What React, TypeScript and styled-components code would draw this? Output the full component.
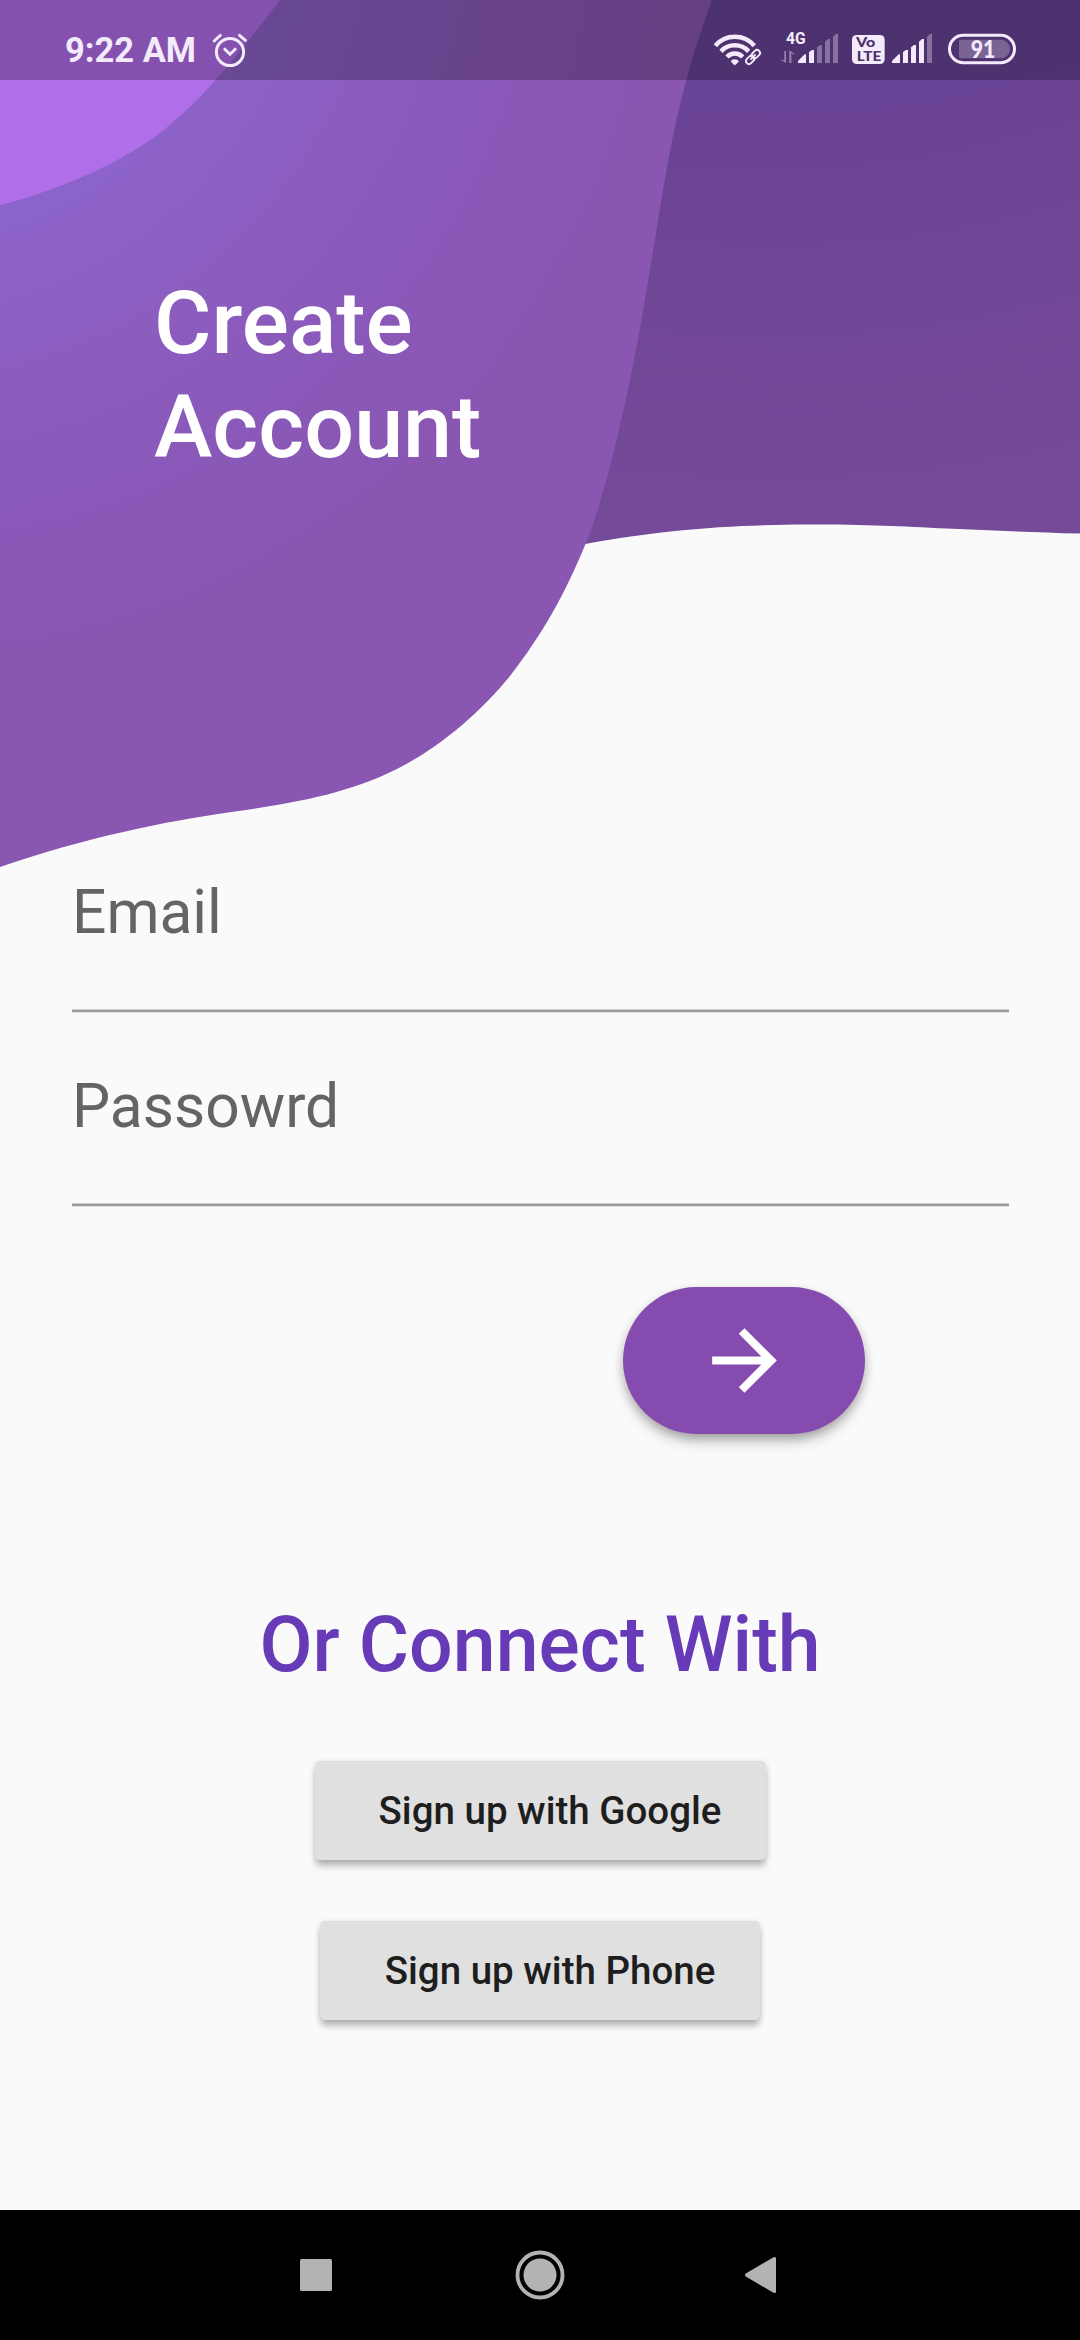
import React from "react";
import styled, { createGlobalStyle } from "styled-components";

const GlobalStyle = createGlobalStyle`
  *, *::before, *::after { box-sizing: border-box; }
  body { margin: 0; background: #fafafa; }
`;

const Screen = styled.div`
  display: flex;
  flex-direction: column;
  width: 1080px;
  height: 2340px;
  overflow: hidden;
  background: #fafafa;
  font-family: Roboto, "Liberation Sans", sans-serif;
`;

const Header = styled.header`
  position: relative;
  display: flex;
  flex-direction: column;
  height: 868px;
  flex: none;
`;

const Waves = styled.svg`
  position: absolute;
  inset: 0;
  display: block;
`;

const StatusBar = styled.div`
  position: relative;
  display: flex;
  justify-content: space-between;
  height: 80px;
  padding: 0 64px 0 65px;
  background: rgba(0, 0, 0, 0.25);
  color: #f3eafb;
`;

const StatusGroup = styled.div`
  display: flex;
  align-items: flex-start;
`;

const Clock = styled.span`
  font-size: 34.5px;
  font-weight: 700;
  line-height: 40px;
  width: 147px;
  margin-top: 30px;
  white-space: nowrap;
`;

const StatusIcon = styled.svg<{ $gap?: number }>`
  display: block;
  flex: none;
  margin-top: 32px;
  margin-left: ${(p) => p.$gap ?? 0}px;
  overflow: visible;
`;

const Title = styled.h1`
  position: relative;
  margin: 191px 0 0 154px;
  color: #fff;
  font-size: 88px;
  font-weight: 500;
  line-height: 104px;
`;

const Form = styled.form`
  display: flex;
  flex-direction: column;
  gap: 57px;
  padding: 8px 71px 0 72px;
`;

const Field = styled.label`
  display: flex;
  flex-direction: column;
  justify-content: space-between;
  height: 137px;
  color: #646464;
  font-size: 60.5px;
  line-height: 74px;
`;

const Underline = styled.span`
  height: 4px;
  background: linear-gradient(#cdcdcd 1px, #9a9a9a 1px 3px, #e2e2e2 3px);
`;

const SubmitButton = styled.button`
  display: flex;
  align-items: center;
  justify-content: center;
  align-self: flex-end;
  width: 242px;
  height: 147px;
  margin: 23px 144px 0 0;
  padding: 0;
  border: 0;
  border-radius: 74px;
  background: #864baf;
  box-shadow: 0 8px 14px -2px rgba(0, 0, 0, 0.3), 0 3px 10px rgba(0, 0, 0, 0.12);
`;

const Connect = styled.section`
  display: flex;
  flex: 1;
  flex-direction: column;
  align-items: center;
  padding-top: 166px;
`;

const ConnectTitle = styled.h2`
  margin: 0 0 71px;
  color: #673ab7;
  font-size: 77px;
  font-weight: 500;
  line-height: 90px;
`;

const ProviderButton = styled.button<{ $width: number }>`
  width: ${(p) => p.$width}px;
  height: 99px;
  margin-bottom: 61px;
  padding: 0 44px 0 64px;
  border: 0;
  border-radius: 5px;
  background: #e0e0e0;
  box-shadow: 0 7px 7px -1px rgba(0, 0, 0, 0.25), 0 1px 6px rgba(0, 0, 0, 0.12);
  color: #1e1e1e;
  font-family: inherit;
  font-size: 38.5px;
  font-weight: 500;
  line-height: 46px;
  white-space: nowrap;
`;

const NavBar = styled.nav`
  display: flex;
  align-items: center;
  justify-content: center;
  flex: none;
  height: 130px;
  background: #000;
`;

const NavItem = styled.div`
  display: flex;
  justify-content: center;
  width: 224px;
`;

const HeaderWaves = () => (
  <Waves width="1080" height="868" viewBox="0 0 1080 868">
    <defs>
      <radialGradient id="plum" gradientUnits="userSpaceOnUse" cx="770" cy="-800" r="1340">
        <stop offset="0.62" stopColor="#674396" />
        <stop offset="0.7" stopColor="#6a4395" />
        <stop offset="0.8" stopColor="#704696" />
        <stop offset="1" stopColor="#754a99" />
      </radialGradient>
      <radialGradient id="violet" gradientUnits="userSpaceOnUse" cx="-100" cy="-100" r="760">
        <stop offset="0.41" stopColor="#8b65cd" />
        <stop offset="0.49" stopColor="#8c61c6" />
        <stop offset="0.65" stopColor="#8b5dbf" />
        <stop offset="0.82" stopColor="#8a59b9" />
        <stop offset="1" stopColor="#8956b2" />
      </radialGradient>
    </defs>
    <path
      d="M560 0H1080V533.6C1030 532 990 530.5 947 528.6C900 526 870 524.6 807 524.4C740 525 660 528 560 549Z"
      fill="url(#plum)"
    />
    <path
      d="M0 0H711.7C703 26 693 53 686.7 79C673 127 665 178 656.7 228.5C646 294 636 358 620 425C611 464 600 508 585.5 544C565 594 542 635 510 676C479 714 440 747 397 769C345 795 288 804 233 811.7C160 822 85 838 0 867Z"
      fill="url(#violet)"
    />
    <path d="M0 0H280C240 52 207 95 165 129C125 161 70 186 0 205.5Z" fill="#b06ee8" />
  </Waves>
);

const AlarmIcon = () => (
  <StatusIcon width="36" height="36" viewBox="0 0 36 36" fill="none" stroke="currentColor" strokeWidth="3" strokeLinecap="round" strokeLinejoin="round">
    <circle cx="18" cy="20" r="13.6" />
    <path d="M2.200 9L8.300 3.300M33.400 8.300L27.500 3.300M12.800 17.200L18 22.300L23.200 17.200" />
  </StatusIcon>
);

const WifiIcon = () => (
  <StatusIcon width="49" height="34" viewBox="0 0 147 102" fill="none" stroke="currentColor">
    <g strokeWidth="13.500">
      <path d="M7 41A77 77 0 0 1 124 41" />
      <path d="M24 58A57 57 0 0 1 107 58" />
      <path d="M42 75A32 32 0 0 1 89 75" />
    </g>
    <path d="M54 88C55 80 75 80 77 88C76 92 71 96 65.500 100C60 96 55 92 54 88Z" fill="currentColor" stroke="none" />
    <g strokeWidth="5.500" transform="rotate(-45 120 75)">
      <rect x="94" y="66" width="28" height="18" rx="9" />
      <rect x="118" y="66" width="28" height="18" rx="9" />
      <path d="M111 75H129" strokeLinecap="round" />
    </g>
  </StatusIcon>
);

const Bars = ({ x, lit }: { x: number; lit: number }) => (
  <g fill="currentColor">
    {[
      "M0 93V87L20 67H24V93Z",
      "M33 93V60L42 54H48V93Z",
      "M57 93V46L66 39H72V93Z",
      "M81 93V29L90 21H96V93Z",
      "M105 93V14L114 6H120V93Z",
    ].map((d, i) => (
      <path key={d} d={d} transform={`translate(${x} 0)`} opacity={i < lit ? 1 : 0.34} />
    ))}
  </g>
);

const MobileSignal = () => (
  <StatusIcon $gap={19} width="57" height="31" viewBox="0 0 171 93">
    <text x="15" y="36" fontSize="48" fontWeight="700" textLength="59" lengthAdjust="spacingAndGlyphs" fill="currentColor">
      4G
    </text>
    <path d="M10 57H15V93L0 84V82L10 86ZM25 93H31V63L39 69V65L25 55Z" fill="currentColor" opacity="0.45" />
    <Bars x={51} lit={2} />
  </StatusIcon>
);

const VolteSignal = () => (
  <StatusIcon $gap={14} width="80" height="31" viewBox="0 0 240 93">
    <rect x="0" y="9" width="98" height="87" rx="14" fill="currentColor" />
    <g fill="#4f316c" fontFamily="Lato, sans-serif" fontWeight="900">
      <text x="12" y="44" fontSize="38" textLength="58" lengthAdjust="spacingAndGlyphs">
        Vo
      </text>
      <text x="14" y="86" fontSize="41" textLength="74" lengthAdjust="spacingAndGlyphs">
        LTE
      </text>
    </g>
    <Bars x={120} lit={4} />
  </StatusIcon>
);

const Battery = () => (
  <StatusIcon $gap={16} width="68" height="34" viewBox="0 0 204 102">
    <rect x="4.500" y="10" width="195" height="82" rx="41" fill="none" stroke="currentColor" strokeWidth="9" />
    <path d="M37 23H158A28 28 0 0 1 158 79H37Q33 79 33 75V27Q33 23 37 23Z" fill="currentColor" opacity="0.27" />
    <text x="68" y="79" fontFamily="Lato, sans-serif" fontSize="74" fontWeight="900" textLength="74" lengthAdjust="spacingAndGlyphs" fill="currentColor">
      91
    </text>
  </StatusIcon>
);

export default function App() {
  return (
    <>
      <GlobalStyle />
      <Screen>
        <Header>
          <HeaderWaves />
          <StatusBar>
            <StatusGroup>
              <Clock>9:22 AM</Clock>
              <AlarmIcon />
            </StatusGroup>
            <StatusGroup>
              <WifiIcon />
              <MobileSignal />
              <VolteSignal />
              <Battery />
            </StatusGroup>
          </StatusBar>
          <Title>
            Create
            <br />
            Account
          </Title>
        </Header>
        <Form>
          <Field>
            Email
            <Underline />
          </Field>
          <Field>
            Passowrd
            <Underline />
          </Field>
          <SubmitButton type="button" aria-label="Continue">
            <svg width="97" height="97" viewBox="0 0 24 24" fill="#fff">
              <path d="M12 4l-1.410 1.410L16.170 11H4v2h12.170l-5.580 5.590L12 20l8-8z" />
            </svg>
          </SubmitButton>
        </Form>
        <Connect>
          <ConnectTitle>Or Connect With</ConnectTitle>
          <ProviderButton $width={451}>Sign up with Google</ProviderButton>
          <ProviderButton $width={440}>Sign up with Phone</ProviderButton>
        </Connect>
        <NavBar>
          <NavItem>
            <svg width="32" height="32" fill="#b3b3b3">
              <rect width="32" height="32" rx="1.500" />
            </svg>
          </NavItem>
          <NavItem>
            <svg width="50" height="50" fill="#b3b3b3">
              <circle cx="25" cy="25" r="22.500" fill="none" stroke="#b3b3b3" strokeWidth="3.800" />
              <circle cx="25" cy="25" r="16.500" />
            </svg>
          </NavItem>
          <NavItem>
            <svg width="38" height="38" fill="#b3b3b3">
              <path d="M0.800 17.500L28.500 1.300Q31 0.200 31 2.500V35.500Q31 37.800 28.500 36.700L0.800 20.500Q-0.800 19 0.800 17.500Z" />
            </svg>
          </NavItem>
        </NavBar>
      </Screen>
    </>
  );
}
